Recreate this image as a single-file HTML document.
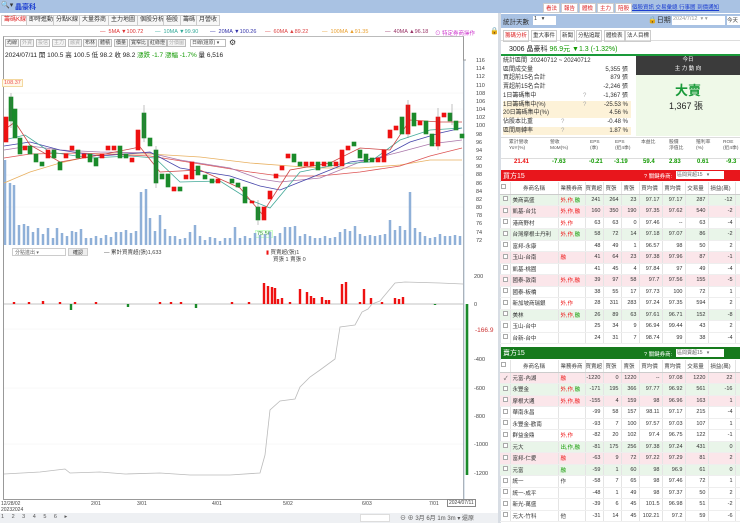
<!DOCTYPE html>
<html><head><meta charset="utf-8">
<style>
*{margin:0;padding:0;box-sizing:border-box}
body{width:740px;height:523px;overflow:hidden;background:#fff;font-family:"Liberation Sans","Noto Sans CJK TC",sans-serif;font-size:6px;color:#333;position:relative}
.a{position:absolute;white-space:nowrap}
.tab{position:absolute;top:15px;height:11px;border:1px solid #ccc;background:#f7f7f7;font-size:6px;line-height:9px;padding:0 2px}
.tb{position:absolute;top:39px;height:8px;border:1px solid #bbb;background:#f5f5f5;font-size:5px;line-height:6px;padding:0 1px;color:#444}
table{border-collapse:collapse;position:absolute;left:500px;width:240px;table-layout:fixed;font-size:5.5px}
td{height:11.5px;border-right:1px solid #e4e4e4;border-bottom:1px solid #eee;text-align:right;padding-right:2px;white-space:nowrap;overflow:hidden}
td:nth-child(2),td:nth-child(3){text-align:left;padding-left:2px}
tr.h td{text-align:center;background:#fff;color:#444;border-bottom:1px solid #ccc;height:12px}
tr.g td{background:#e9f5e9}tr.p td{background:#fbe6ea}
.cb{display:inline-block;width:5px;height:5px;border:1px solid #aaa;background:#fff}
.r{color:#e11}.gn{color:#190}
.st div{position:absolute;left:503px;width:128px;height:8.7px;font-size:6px;line-height:8.7px}
.st span{position:absolute;right:3px}
</style></head><body>
<!-- top bar -->
<div class="a" style="left:0;top:0;width:740px;height:13px;background:#a9c2e3"></div>
<div class="a" style="left:1px;top:1px;font-size:7px">🔍▾</div>
<div class="a" style="left:15px;top:2px;font-size:7px;color:#1a3cd0;font-weight:bold">晶豪科</div>
<div class="a" style="left:543px;top:3px;height:9px;width:122px;">
<span style="display:inline-block;background:#fff;border:1px solid #ccc;color:#d22;font-size:5.5px;padding:0 2px;margin-right:1px">看法</span><span style="display:inline-block;background:#fff;border:1px solid #ccc;color:#d22;font-size:5.5px;padding:0 2px;margin-right:1px">報告</span><span style="display:inline-block;background:#fff;border:1px solid #ccc;color:#d22;font-size:5.5px;padding:0 2px;margin-right:1px">體檢</span><span style="display:inline-block;background:#fff;border:1px solid #ccc;color:#d22;font-size:5.5px;padding:0 2px;margin-right:1px">主力</span><span style="display:inline-block;background:#fff;border:1px solid #ccc;color:#d22;font-size:5.5px;padding:0 2px">陪股</span></div>
<div class="a" style="left:632px;top:3px;font-size:5.5px;color:#1a3cd0;text-decoration:underline">個股資訊 交易彙總 行事曆 到價通知</div>
<div class="a" style="left:0;top:13px;width:498px;height:14px;background:#fff"></div>
<div class="tab" style="left:1px;color:#d22;background:#fff">籌碼K線</div>
<div class="tab" style="left:26px">即時進動</div>
<div class="tab" style="left:53px">分點K線</div>
<div class="tab" style="left:79px">大量券商</div>
<div class="tab" style="left:108px">主力地圖</div>
<div class="tab" style="left:137px">個股分析</div>
<div class="tab" style="left:163px">極股</div>
<div class="tab" style="left:180px">籌碼</div>
<div class="tab" style="left:196px">月營收</div>
<!-- MA legend -->
<div class="a" style="top:29px;left:100px;font-size:5.5px;color:#d33">— &nbsp;5MA ▼100.72</div>
<div class="a" style="top:29px;left:155px;font-size:5.5px;color:#3a9">— &nbsp;10MA ▼99.90</div>
<div class="a" style="top:29px;left:210px;font-size:5.5px;color:#33a">— &nbsp;20MA ▼100.26</div>
<div class="a" style="top:29px;left:265px;font-size:5.5px;color:#d44">— &nbsp;60MA ▲89.22</div>
<div class="a" style="top:29px;left:322px;font-size:5.5px;color:#e9a030">— &nbsp;100MA ▲91.35</div>
<div class="a" style="top:29px;left:385px;font-size:5.5px;color:#936">— &nbsp;40MA ▲96.18</div>
<div class="a" style="top:29px;left:435px;font-size:5.5px;color:#c3c">⊙ 特定券商操作</div>
<div class="a" style="top:27px;left:490px;font-size:7px">🔒</div>
<!-- chart frame -->
<div class="a" style="left:3px;top:36px;width:461px;height:464px;border:1px solid #999;border-top:1px solid #bbb"></div>
<div class="tb" style="left:5px">均線</div><div class="tb" style="left:20px;color:#aaa">外資</div><div class="tb" style="left:36px;color:#aaa">投信</div><div class="tb" style="left:52px;color:#aaa">主力</div><div class="tb" style="left:68px;color:#aaa">融資</div><div class="tb" style="left:83px">布林</div><div class="tb" style="left:98px">體積</div><div class="tb" style="left:114px">價量</div><div class="tb" style="left:129px">寬窄比</div><div class="tb" style="left:148px">紅綠燈</div><div class="tb" style="left:167px;color:#aaa">分價圖</div><div class="tb" style="left:190px;width:36px;background:#fff">日線(還原) ▾</div>
<div class="a" style="left:229px;top:38px;font-size:8px">⚙</div>
<div class="a" style="left:5px;top:49px;font-size:6.5px;color:#222">2024/07/11 開 100.5 高 100.5 低 98.2 收 98.2 <span class="gn">漲跌 -1.7 漲幅 -1.7%</span> 量 6,516</div>
<div class="a" style="left:2px;top:79px;font-size:5.5px;color:#e55;border:1px solid #f3d8a0;background:#fff8e8;padding:0 1px">108.37</div>
<div class="a" style="left:255px;top:230px;font-size:5.5px;color:#393;border:1px solid #cfc;background:#f4fff4;padding:0 1px">75.56</div>
<svg class="a" style="left:0;top:0" width="500" height="515">
<g stroke="#f0f0f0" stroke-width="0.5"><line x1="4" y1="93" x2="463" y2="93"/><line x1="4" y1="109" x2="463" y2="109"/><line x1="4" y1="142" x2="463" y2="142"/><line x1="4" y1="175" x2="463" y2="175"/><line x1="4" y1="207" x2="463" y2="207"/><line x1="4" y1="329" x2="463" y2="329"/><line x1="4" y1="388" x2="463" y2="388"/><line x1="4" y1="444" x2="463" y2="444"/></g>
<line x1="464" y1="60" x2="464" y2="500" stroke="#bcd" stroke-width="1"/>
<!-- volume -->
<path stroke="#8fb0d8" stroke-width="2.5" d="M5 245V160M10 245V183M14 245V185M19 245V225M24 245V224M28 245V226M33 245V232M38 245V228M43 245V234M48 245V228M53 245V238M57 245V228M62 245V233M67 245V236M72 245V231M76 245V232M81 245V229M86 245V238M91 245V238M96 245V236M101 245V238M106 245V235M111 245V237M116 245V232M121 245V232M126 245V230M131 245V233M136 245V231M141 245V192M146 245V189M150 245V218M155 245V231M160 245V215M165 245V229M170 245V236M175 245V236M180 245V239M185 245V238M190 245V232M195 245V225M200 245V236M205 245V240M210 245V237M215 245V238M220 245V241M225 245V238M230 245V238M235 245V227M240 245V238M245 245V236M250 245V238M255 245V233M260 245V235M265 245V234M270 245V232M275 245V236M280 245V233M285 245V227M290 245V227M295 245V226M300 245V236M305 245V234M310 245V236M315 245V238M320 245V238M325 245V236M330 245V238M335 245V237M340 245V232M345 245V229M350 245V231M355 245V226M360 245V234M365 245V236M370 245V235M375 245V236M380 245V235M385 245V234M390 245V220M395 245V230M400 245V226M405 245V230M410 245V192M415 245V228M420 245V232M425 245V236M430 245V238M435 245V237M440 245V234M445 245V236M450 245V236M455 245V235M460 245V236"/>
<!-- MAs -->
<polyline fill="none" stroke="#e8b060" stroke-width="0.8" points="4,183 30,172 60,163 100,154 150,154 200,157 250,163 290,166 320,168 360,168 400,165 430,160 462,160"/>
<polyline fill="none" stroke="#d55" stroke-width="0.8" points="4,158 30,154 80,153 150,156 200,164 250,172 280,176 320,176 360,172 400,166 430,156 462,148"/>
<polyline fill="none" stroke="#a7a" stroke-width="0.8" points="4,150 30,146 60,150 100,152 150,153 180,160 230,168 260,179 280,182 320,178 360,162 400,152 430,144 462,140"/>
<polyline fill="none" stroke="#44a" stroke-width="0.8" points="4,146 30,142 60,150 100,156 150,152 180,168 230,176 260,186 280,190 310,178 350,162 380,158 410,142 440,133 462,128"/>
<polyline fill="none" stroke="#4a9" stroke-width="0.8" points="4,140 25,135 50,152 90,158 130,156 155,158 180,182 220,181 250,200 270,208 300,172 340,164 370,162 400,140 430,130 462,128"/>
<polyline fill="none" stroke="#c44" stroke-width="0.8" points="4,130 15,122 30,145 60,162 100,155 140,147 160,172 200,170 240,188 262,214 290,170 330,163 360,148 390,150 410,120 440,122 462,122"/>
<!-- candles -->
<g stroke-width="0.6">
<g fill="#e11" stroke="#e11"><rect x="4" y="117" width="4" height="25"/><rect x="23" y="146" width="4" height="4"/><rect x="46" y="150" width="4" height="8"/><rect x="64" y="154" width="4" height="4"/><rect x="70" y="146" width="4" height="4"/><rect x="82" y="154" width="4" height="4"/><rect x="100" y="154" width="4" height="4"/><rect x="106" y="146" width="4" height="4"/><rect x="112" y="146" width="4" height="4"/><rect x="130" y="158" width="4" height="4"/><rect x="136" y="130" width="4" height="20"/><rect x="172" y="187" width="4" height="4"/><rect x="184" y="175" width="4" height="4"/><rect x="190" y="162" width="4" height="17"/><rect x="216" y="179" width="4" height="4"/><rect x="250" y="201" width="4" height="2"/><rect x="262" y="207" width="4" height="13"/><rect x="268" y="191" width="4" height="8"/><rect x="274" y="174" width="4" height="4"/><rect x="280" y="166" width="4" height="4"/><rect x="286" y="154" width="4" height="4"/><rect x="304" y="162" width="4" height="4"/><rect x="310" y="162" width="4" height="4"/><rect x="322" y="162" width="4" height="4"/><rect x="334" y="162" width="4" height="4"/><rect x="340" y="150" width="4" height="16"/><rect x="346" y="146" width="4" height="4"/><rect x="376" y="158" width="4" height="4"/><rect x="382" y="150" width="4" height="12"/><rect x="388" y="130" width="4" height="8"/><rect x="394" y="126" width="4" height="4"/><rect x="406" y="105" width="4" height="29"/><rect x="418" y="121" width="4" height="4"/><rect x="436" y="117" width="4" height="29"/><rect x="442" y="113" width="4" height="4"/></g>
<g fill="#1a8a2a" stroke="#1a8a2a"><rect x="9" y="97" width="4" height="24"/><rect x="13" y="109" width="4" height="29"/><rect x="18" y="138" width="4" height="16"/><rect x="28" y="146" width="4" height="8"/><rect x="34" y="154" width="4" height="8"/><rect x="40" y="162" width="4" height="4"/><rect x="52" y="150" width="4" height="8"/><rect x="58" y="162" width="4" height="8"/><rect x="76" y="150" width="4" height="8"/><rect x="88" y="154" width="4" height="8"/><rect x="94" y="158" width="4" height="8"/><rect x="118" y="146" width="4" height="12"/><rect x="124" y="154" width="4" height="4"/><rect x="142" y="113" width="4" height="25"/><rect x="148" y="138" width="4" height="8"/><rect x="154" y="150" width="4" height="33"/><rect x="160" y="174" width="4" height="5"/><rect x="166" y="174" width="4" height="13"/><rect x="178" y="187" width="4" height="4"/><rect x="196" y="166" width="4" height="9"/><rect x="203" y="175" width="4" height="4"/><rect x="210" y="179" width="4" height="4"/><rect x="230" y="179" width="4" height="4"/><rect x="236" y="183" width="4" height="4"/><rect x="243" y="187" width="4" height="16"/><rect x="256" y="207" width="4" height="13"/><rect x="292" y="154" width="4" height="8"/><rect x="298" y="162" width="4" height="4"/><rect x="316" y="162" width="4" height="8"/><rect x="328" y="162" width="4" height="4"/><rect x="352" y="142" width="4" height="4"/><rect x="358" y="150" width="4" height="8"/><rect x="364" y="154" width="4" height="8"/><rect x="370" y="158" width="4" height="4"/><rect x="400" y="117" width="4" height="17"/><rect x="412" y="113" width="4" height="13"/><rect x="424" y="121" width="4" height="13"/><rect x="430" y="134" width="4" height="12"/><rect x="448" y="113" width="4" height="8"/><rect x="454" y="121" width="4" height="9"/><rect x="460" y="134" width="4" height="4"/></g>
<g stroke="#666" stroke-width="0.4"><line x1="11" y1="93" x2="11" y2="128"/><line x1="144" y1="105" x2="144" y2="142"/><line x1="258" y1="200" x2="258" y2="225"/><line x1="408" y1="100" x2="408" y2="138"/><line x1="438" y1="108" x2="438" y2="150"/><line x1="452" y1="104" x2="452" y2="125"/><line x1="156" y1="146" x2="156" y2="188"/></g>
</g>
<!-- price axis -->
<g font-size="5.5" fill="#444" font-family="Liberation Sans"><text x="476" y="62">116</text><text x="476" y="70">114</text><text x="476" y="78">112</text><text x="476" y="87">110</text><text x="476" y="95">108</text><text x="476" y="103">106</text><text x="476" y="111">104</text><text x="476" y="119">102</text><text x="476" y="127">100</text><text x="476" y="136">98</text><text x="476" y="144">96</text><text x="476" y="152">94</text><text x="476" y="160">92</text><text x="476" y="168">90</text><text x="476" y="176">88</text><text x="476" y="185">86</text><text x="476" y="193">84</text><text x="476" y="201">82</text><text x="476" y="209">80</text><text x="476" y="217">78</text><text x="476" y="225">76</text><text x="476" y="234">74</text><text x="476" y="242">72</text>
<text x="474" y="278">200</text><text x="474" y="306">0</text><text x="474" y="361">-400</text><text x="474" y="390">-600</text><text x="474" y="418">-800</text><text x="474" y="446">-1000</text><text x="474" y="475">-1200</text><text x="475" y="332" fill="#c33" font-size="6.5">-166.9</text></g>
<line x1="463" y1="60" x2="466" y2="60" stroke="#999"/>
<!-- lower panel -->
<line x1="4" y1="304" x2="463" y2="304" stroke="#888" stroke-width="0.6"/>
<path stroke="#e11" stroke-width="2.4" d="M14 304V302M29 304V302M43 304V301M60 304V302M75 304V302M96 304V302M160 304V302M171 304V302M181 304V302M232 304V302M249 304V302M264 304V283M268 304V286M272 304V287M275 304V288M278 304V299M282 304V298M290 304V302M300 304V289M307 304V292M311 304V296M314 304V298M322 304V297M326 304V300M329 304V300M342 304V284M346 304V282M360 304V302M364 304V289M371 304V298M382 304V302M395 304V298M399 304V299M403 304V297"/>
<path stroke="#1a8a2a" stroke-width="2.4" d="M71 304V310M128 304V307M196 304V308M435 304V305"/>
<path stroke="#1a8a2a" stroke-width="2.6" d="M467 304V475"/>
<polyline fill="none" stroke="#bbb" stroke-width="0.8" points="4,474 40,472 65,469 70,473 100,472 125,474 160,473 190,475 230,475 260,473 265,455 270,410 280,401 295,399 300,387 310,377 320,370 335,359 340,327 355,325 362,312 368,309 372,304 380,301 395,283 405,282 440,283 463,284"/>
</svg>
<div class="a" style="left:12px;top:248px;width:54px;height:8px;border:1px solid #ccc;font-size:5px;padding-left:2px;color:#666">分點進出 ▾</div>
<div class="a" style="left:68px;top:248px;width:20px;height:8px;border:1px solid #ccc;background:#eee;font-size:5px;text-align:center">確認</div>
<div class="a" style="left:104px;top:248px;font-size:5.5px;color:#444">— 累計買賣超(張)1,633</div>
<div class="a" style="left:266px;top:248px;font-size:5.5px;color:#444"><span class="r">▮</span> 買賣超(張)1</div>
<div class="a" style="left:273px;top:255px;font-size:5.5px;color:#444">買張 1 賣張 0</div>
<!-- dates -->
<div class="a" style="left:1px;top:501px;font-size:5px;color:#444;line-height:6px">12/28/02<br>20232024</div>
<div class="a" style="left:91px;top:501px;font-size:5px;color:#444">2/01</div>
<div class="a" style="left:137px;top:501px;font-size:5px;color:#444">3/01</div>
<div class="a" style="left:212px;top:501px;font-size:5px;color:#444">4/01</div>
<div class="a" style="left:283px;top:501px;font-size:5px;color:#444">5/02</div>
<div class="a" style="left:362px;top:501px;font-size:5px;color:#444">6/03</div>
<div class="a" style="left:429px;top:501px;font-size:5px;color:#444">7/01</div>
<div class="a" style="left:447px;top:499px;font-size:5px;color:#444;border:1px solid #888;padding:0 1px;background:#fff">2024/07/11</div>
<div class="a" style="left:0;top:513px;width:498px;height:10px;background:#eef0f3"></div>
<div class="a" style="left:1px;top:514px;font-size:5.5px;color:#555;letter-spacing:3px">1 2 3 4 5 6 ▸</div>
<div class="a" style="left:360px;top:514px;width:30px;height:8px;background:#fff;border:1px solid #ddd"></div>
<div class="a" style="left:400px;top:513px;font-size:6px;color:#555">⊖ ⊕ 3月 6月 1m 3m ▾ 還原</div>
<!-- right panel -->
<div class="a" style="left:498px;top:13px;width:3px;height:510px;background:#d8dde4"></div>
<div class="a" style="left:501px;top:14px;width:239px;height:14px;background:#a9c2e3"></div>
<div class="a" style="left:503px;top:16px;font-size:6.5px">統計天數</div>
<div class="a" style="left:533px;top:16px;width:23px;height:9px;background:#fff;font-size:5.5px;padding-left:1px">1 &nbsp; ▾</div>
<div class="a" style="left:648px;top:15px;font-size:7px">🔒日期</div>
<div class="a" style="left:672px;top:16px;width:53px;height:9px;background:#fff;font-size:5.5px;color:#999;padding-left:1px">2024/7/12 &nbsp;▾ ▾</div>
<div class="a" style="left:727px;top:16px;width:13px;height:9px;background:#fff;font-size:5.5px">今天</div>
<div class="a" style="left:501px;top:30px;width:239px;height:11px;border-bottom:1px solid #ddd"></div>
<div class="a" style="left:503px;top:30px;font-size:5.5px;line-height:10px;border:1px solid #ccc;padding:0 1px;color:#d22">籌碼分析</div>
<div class="a" style="left:531px;top:30px;font-size:5.5px;line-height:10px;border:1px solid #ccc;padding:0 1px">重大事件</div>
<div class="a" style="left:560px;top:30px;font-size:5.5px;line-height:10px;border:1px solid #ccc;padding:0 1px">新聞</div>
<div class="a" style="left:576px;top:30px;font-size:5.5px;line-height:10px;border:1px solid #ccc;padding:0 1px">分點追蹤</div>
<div class="a" style="left:604px;top:30px;font-size:5.5px;line-height:10px;border:1px solid #ccc;padding:0 1px">體檢表</div>
<div class="a" style="left:625px;top:30px;font-size:5.5px;line-height:10px;border:1px solid #ccc;padding:0 1px">法人目標</div>
<div class="a" style="left:509px;top:44px;font-size:7px;color:#222">3006 晶豪科 <span class="gn">96.9元 ▼1.3 (-1.32%)</span></div>
<div class="a" style="left:501px;top:54px;width:239px;height:2px;background:#1a9a3a"></div>
<div class="st">
<div style="top:57px">統計區間 &nbsp;20240712 ~ 20240712</div>
<div style="top:65.7px">區間成交量<span>5,355 張</span></div>
<div style="top:74.4px">買超前15名合計<span>879 張</span></div>
<div style="top:83.1px">賣超前15名合計<span>-2,246 張</span></div>
<div style="top:91.8px">1日籌碼集中 <b style="position:absolute;left:80px;font-weight:normal;color:#aaa">?</b><span>-1,367 張</span></div>
<div style="top:100.5px;background:#fdf2d8">1日籌碼集中(%) <b style="position:absolute;left:80px;font-weight:normal;color:#aaa">?</b><span>-25.53 %</span></div>
<div style="top:109.2px;background:#fdf2d8">20日籌碼集中(%)<span>4.56 %</span></div>
<div style="top:117.9px">佔股本比重 <b style="position:absolute;left:58px;font-weight:normal;color:#aaa">?</b><span>-0.48 %</span></div>
<div style="top:126.6px;background:#fdf2d8">區間周轉率 <b style="position:absolute;left:58px;font-weight:normal;color:#aaa">?</b><span>1.87 %</span></div>
</div>
<div class="a" style="left:636px;top:56px;width:104px;height:19px;background:#3b3b3b;color:#fff;font-size:5.5px;text-align:center;line-height:9px">今日<br>主 力 動 向</div>
<div class="a" style="left:636px;top:75px;width:104px;height:61px;background:#eff9e8"></div>
<div class="a" style="left:675px;top:80px;font-size:13px;color:#1a9a3a;font-weight:bold">大賣</div>
<div class="a" style="left:669px;top:99px;font-size:9px;color:#222">1,367 張</div>
<div class="a" style="left:501px;top:137px;width:239px;height:22px;border-top:1px solid #ddd;border-bottom:1px solid #ddd"></div>
<div class="a" style="left:501px;top:140px;width:239px;font-size:4.8px;color:#555;line-height:6px">
<span class="a" style="left:8px">累計營收<br>YoY(%)</span><span class="a" style="left:49px">營收<br>MoM(%)</span><span class="a" style="left:89px">EPS<br>(季)</span><span class="a" style="left:114px">EPS<br>(近4季)</span><span class="a" style="left:140px">本益比</span><span class="a" style="left:168px">股價<br>淨值比</span><span class="a" style="left:195px">殖利率<br>(%)</span><span class="a" style="left:222px">ROE<br>(近4季)</span></div>
<div class="a" style="left:501px;top:159px;width:239px;font-size:6px;font-weight:bold">
<span class="a r" style="left:13px">21.41</span><span class="a gn" style="left:51px">-7.63</span><span class="a gn" style="left:88px">-0.21</span><span class="a gn" style="left:113px">-3.19</span><span class="a gn" style="left:142px">59.4</span><span class="a gn" style="left:168px">2.83</span><span class="a gn" style="left:196px">0.61</span><span class="a gn" style="left:225px">-9.3</span></div>
<div class="a" style="left:501px;top:170px;width:239px;height:11px;background:#e8161c"></div>
<div class="a" style="left:503px;top:171px;font-size:7px;color:#fff">買方15</div>
<div class="a" style="left:644px;top:172px;font-size:5.5px;color:#fff">? 關鍵券商:</div>
<div class="a" style="left:676px;top:171px;width:48px;height:8px;background:#fff;font-size:5px;padding-left:1px;color:#666">區間買超15 &nbsp; ▾</div>
<table style="top:182px">
<colgroup><col style="width:10px"><col style="width:48px"><col style="width:27px"><col style="width:18px"><col style="width:18px"><col style="width:18px"><col style="width:23px"><col style="width:23px"><col style="width:23px"><col style="width:27px"><col style="width:5px"></colgroup>
<tr class="h"><td><i class="cb"></i></td><td style="text-align:center">券商名稱</td><td style="text-align:center">業務券商</td><td>買賣超</td><td>買張</td><td>賣張</td><td>買均價</td><td>賣均價</td><td>交易量</td><td>損益(萬)</td><td></td></tr>
<tr class="g"><td><i class="cb"></i></td><td>美商高盛</td><td><span class="r">外,作,</span><span class="gn">融</span></td><td>241</td><td>264</td><td>23</td><td>97.17</td><td>97.17</td><td>287</td><td>-12</td><td></td></tr>
<tr class="p"><td><i class="cb"></i></td><td>凱基-台北</td><td><span class="r">外,作,</span><span class="r">融</span></td><td>160</td><td>350</td><td>190</td><td>97.35</td><td>97.62</td><td>540</td><td>-2</td><td></td></tr>
<tr><td><i class="cb"></i></td><td>港商野村</td><td class="r">外,作</td><td>63</td><td>63</td><td>0</td><td>97.46</td><td>--</td><td>63</td><td>-4</td><td></td></tr>
<tr class="g"><td><i class="cb"></i></td><td>台灣摩根士丹利</td><td><span class="r">外,作,</span><span class="gn">融</span></td><td>58</td><td>72</td><td>14</td><td>97.18</td><td>97.07</td><td>86</td><td>-2</td><td></td></tr>
<tr><td><i class="cb"></i></td><td>富邦-永康</td><td></td><td>48</td><td>49</td><td>1</td><td>96.57</td><td>98</td><td>50</td><td>2</td><td></td></tr>
<tr class="p"><td><i class="cb"></i></td><td>玉山-台南</td><td class="r">融</td><td>41</td><td>64</td><td>23</td><td>97.38</td><td>97.96</td><td>87</td><td>-1</td><td></td></tr>
<tr><td><i class="cb"></i></td><td>凱基-桃園</td><td></td><td>41</td><td>45</td><td>4</td><td>97.84</td><td>97</td><td>49</td><td>-4</td><td></td></tr>
<tr class="p"><td><i class="cb"></i></td><td>國泰-敦南</td><td class="r">外,作,融</td><td>39</td><td>97</td><td>58</td><td>97.7</td><td>97.56</td><td>155</td><td>-5</td><td></td></tr>
<tr><td><i class="cb"></i></td><td>國泰-板橋</td><td></td><td>38</td><td>55</td><td>17</td><td>97.73</td><td>100</td><td>72</td><td>1</td><td></td></tr>
<tr><td><i class="cb"></i></td><td>新加坡商瑞銀</td><td class="r">外,作</td><td>28</td><td>311</td><td>283</td><td>97.24</td><td>97.35</td><td>594</td><td>2</td><td></td></tr>
<tr class="g"><td><i class="cb"></i></td><td>美林</td><td><span class="r">外,作,</span><span class="gn">融</span></td><td>26</td><td>89</td><td>63</td><td>97.61</td><td>96.71</td><td>152</td><td>-8</td><td></td></tr>
<tr><td><i class="cb"></i></td><td>玉山-台中</td><td></td><td>25</td><td>34</td><td>9</td><td>96.94</td><td>99.44</td><td>43</td><td>2</td><td></td></tr>
<tr><td><i class="cb"></i></td><td>台新-台中</td><td></td><td>24</td><td>31</td><td>7</td><td>98.74</td><td>99</td><td>38</td><td>-4</td><td></td></tr>
</table>
<div class="a" style="left:501px;top:347px;width:239px;height:12px;background:#167a1c"></div>
<div class="a" style="left:503px;top:348px;font-size:7px;color:#fff">賣方15</div>
<div class="a" style="left:644px;top:350px;font-size:5.5px;color:#fff">? 關鍵券商:</div>
<div class="a" style="left:676px;top:349px;width:48px;height:8px;background:#fff;font-size:5px;padding-left:1px;color:#666">區間賣超15 &nbsp; ▾</div>
<table style="top:360px">
<colgroup><col style="width:10px"><col style="width:48px"><col style="width:27px"><col style="width:18px"><col style="width:18px"><col style="width:18px"><col style="width:23px"><col style="width:23px"><col style="width:23px"><col style="width:27px"><col style="width:5px"></colgroup>
<tr class="h"><td><i class="cb"></i></td><td style="text-align:center">券商名稱</td><td style="text-align:center">業務券商</td><td>買賣超</td><td>買張</td><td>賣張</td><td>買均價</td><td>賣均價</td><td>交易量</td><td>損益(萬)</td><td></td></tr>
<tr class="p"><td>✓</td><td>元富-內湖</td><td class="r">融</td><td>-1220</td><td>0</td><td>1220</td><td>--</td><td>97.08</td><td>1220</td><td>22</td><td></td></tr>
<tr class="g"><td><i class="cb"></i></td><td>永豐金</td><td><span class="r">外,作,</span><span class="gn">融</span></td><td>-171</td><td>195</td><td>366</td><td>97.77</td><td>96.92</td><td>561</td><td>-16</td><td></td></tr>
<tr class="p"><td><i class="cb"></i></td><td>摩根大通</td><td class="r">外,作,融</td><td>-155</td><td>4</td><td>159</td><td>98</td><td>96.96</td><td>163</td><td>1</td><td></td></tr>
<tr><td><i class="cb"></i></td><td>華南永昌</td><td></td><td>-99</td><td>58</td><td>157</td><td>98.11</td><td>97.17</td><td>215</td><td>-4</td><td></td></tr>
<tr><td><i class="cb"></i></td><td>永豐金-歡南</td><td></td><td>-93</td><td>7</td><td>100</td><td>97.57</td><td>97.03</td><td>107</td><td>1</td><td></td></tr>
<tr><td><i class="cb"></i></td><td>群益金鼎</td><td class="r">外,作</td><td>-82</td><td>20</td><td>102</td><td>97.4</td><td>96.75</td><td>122</td><td>-1</td><td></td></tr>
<tr class="g"><td><i class="cb"></i></td><td>元大</td><td class="gn">出,作,融</td><td>-81</td><td>175</td><td>256</td><td>97.38</td><td>97.24</td><td>431</td><td>0</td><td></td></tr>
<tr class="p"><td><i class="cb"></i></td><td>富邦-仁愛</td><td class="r">融</td><td>-63</td><td>9</td><td>72</td><td>97.22</td><td>97.29</td><td>81</td><td>2</td><td></td></tr>
<tr class="g"><td><i class="cb"></i></td><td>元富</td><td class="gn">融</td><td>-59</td><td>1</td><td>60</td><td>98</td><td>96.9</td><td>61</td><td>0</td><td></td></tr>
<tr><td><i class="cb"></i></td><td>統一</td><td>作</td><td>-58</td><td>7</td><td>65</td><td>98</td><td>97.46</td><td>72</td><td>1</td><td></td></tr>
<tr><td><i class="cb"></i></td><td>統一-成平</td><td></td><td>-48</td><td>1</td><td>49</td><td>98</td><td>97.37</td><td>50</td><td>2</td><td></td></tr>
<tr><td><i class="cb"></i></td><td>新光-萬盛</td><td></td><td>-39</td><td>6</td><td>45</td><td>101.5</td><td>96.98</td><td>51</td><td>-2</td><td></td></tr>
<tr><td><i class="cb"></i></td><td>元大-竹科</td><td>他</td><td>-31</td><td>14</td><td>45</td><td>102.21</td><td>97.2</td><td>59</td><td>-6</td><td></td></tr>
</table>
</body></html>
